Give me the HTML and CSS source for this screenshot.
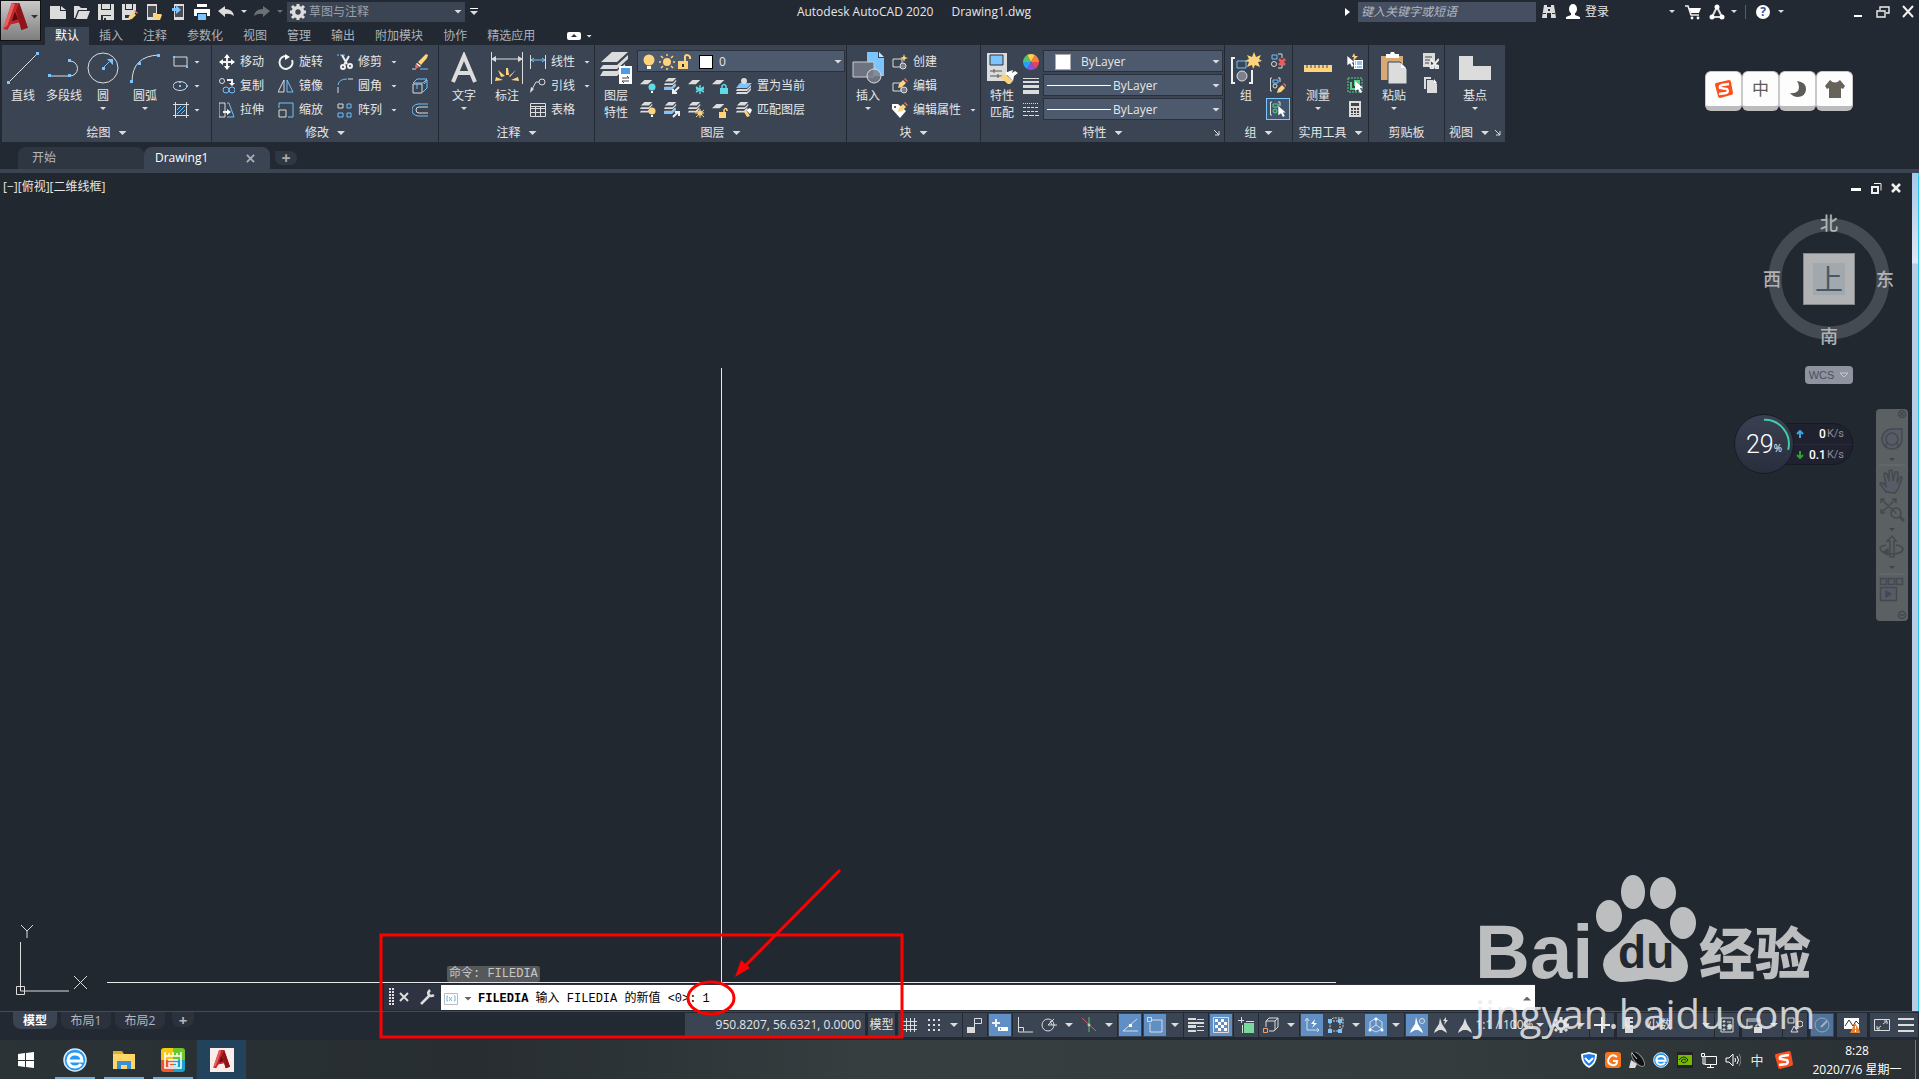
FILE: index.html
```
<!DOCTYPE html>
<html lang="zh-CN">
<head>
    <meta charset="UTF-8">
    <meta name="viewport" content="width=device-width, initial-scale=1.0">
    <title>Autodesk AutoCAD 2020 - Drawing1.dwg</title>
    <link rel="stylesheet" href="styles.css">
</head>
<body>
    <!-- shared shapes -->
    <svg class="sprite" aria-hidden="true">
        <symbol id="sheet" viewBox="0 0 16 16"><path class="g" d="M5 1h9l-5 5H0z"/></symbol>
        <symbol id="sheets" viewBox="0 0 16 16"><path class="g" d="M5 0h9l-4 4H1zM1 6h9l4-4v2l-4 4H0zM1 10h8l4-4v2l-3 4H0z"/></symbol>
        <symbol id="pencil" viewBox="0 0 10 10"><path class="y" d="M0 10l1-4 4-4 3 3-4 4z"/><path class="r" d="M6 1l1-1 3 3-1 1z"/></symbol>
        <symbol id="cursor" viewBox="0 0 8 12"><path class="w" d="M0 0l8 7H5l2 4-2 1-2-4-3 2z"/></symbol>
        <symbol id="logo-a" viewBox="0 0 24 26"><path fill="#c1272d" d="M8 0h7l8 23-6 2-2-7-8 2-3 5-4-1z"/><path fill="#8d1519" d="M15 0l8 23-6 2-5-18z"/><path fill="#e8605f" d="M8 0l3 1-7 20-4 3z"/><path fill="#5b0d10" d="M11 8l3 7-6 2z"/></symbol>
        <symbol id="sogou" viewBox="0 0 18 18"><path fill="#fb4f1d" d="M1 3l13-3q2 0 2 2l2 11q0 2-2 2L5 18q-2 0-2-2L0 5q0-2 1-2z"/><path fill="none" stroke="#fff" stroke-width="2.4" d="M14 4L7 5Q4 6 5 8l7 1q2 3-1 4l-7 1"/></symbol>
    </svg>

    <header class="header">
        <button class="app-menu" aria-label="应用程序菜单"><svg><use href="#logo-a"/></svg><i class="caret"></i></button>
        <div class="header-rows">
            <div class="titlebar">
                <div class="quick">
                    <button aria-label="新建"><svg viewBox="0 0 16 16"><path class="g" d="M0 2h10v5h6v8H0z"/><path class="g" d="M11 2l5 4h-5z"/></svg></button>
                    <button aria-label="打开"><svg viewBox="0 0 16 16"><path class="g" d="M0 2h5l2 2h6v2H4L1 14H0zM5 7h11l-3 8H2z"/></svg></button>
                    <button aria-label="保存"><svg viewBox="0 0 16 16"><path class="g" d="M0 0h3v6h10V0h3v16H0zM4 0h8v5H4z"/><path class="k" d="M3 11h10v5H3z"/><path class="g" d="M5 12h8v4H8v-2H6v2H5z"/></svg></button>
                    <button aria-label="另存为"><svg viewBox="0 0 16 16"><path class="g" d="M0 0h3v6h8V0h3v8L7 16H0z"/><path class="g" d="M4 0h6v5H4z"/><path class="k" d="M3 11h5v3H3z"/><use href="#pencil" x="6" y="6" width="10" height="10"/></svg></button>
                    <button aria-label="从移动设备打开"><svg viewBox="0 0 16 16"><path class="g" d="M1 0h10v16H1z"/><path fill="#4a4d52" d="M2 2h8v11H2z"/><path class="y" d="M7 9h3l1 1h4l1 1-2 5H7z"/></svg></button>
                    <button aria-label="保存到移动设备"><svg viewBox="0 0 16 16"><path class="g" d="M4 0h10v16H4z"/><path fill="#4a4d52" d="M5 2h8v11H5z"/><path class="b" d="M2 4h4V1l5 5-5 4V7H2z"/></svg></button>
                    <button aria-label="打印"><svg viewBox="0 0 16 16"><path class="w" d="M3 0h10v3H3zM0 5h16v7h-3V9H3v3H0z"/><path class="b" d="M4 10h8v6H4z"/></svg></button>
                    <button aria-label="放弃"><svg viewBox="0 0 16 16"><path class="g" d="M0 7l7-5v3q8 0 9 7-4-3-9-2v3z"/></svg></button>
                    <i class="caret sm"></i>
                    <button class="dim" aria-label="重做"><svg viewBox="0 0 16 16"><path class="g" d="M16 7L9 2v3q-8 0-9 7 4-3 9-2v3z"/></svg></button>
                    <i class="caret sm dim"></i>
                </div>
                <label class="workspace">
                    <svg viewBox="0 0 16 16"><circle cx="8" cy="8" r="4.5" fill="none" stroke="#ddd" stroke-width="3.6"/><path stroke="#ddd" stroke-width="3" d="M8 0v3M8 13v3M0 8h3M13 8h3M2 2l2 2M12 12l2 2M14 2l-2 2M4 12l-2 2"/></svg>
                    <select aria-label="工作空间"><option>草图与注释</option></select>
                    <i class="caret"></i>
                </label>
                <button class="customize" aria-label="自定义快速访问工具栏"><i class="caret"></i></button>
                <h1 class="title"><span>Autodesk AutoCAD 2020</span><span>Drawing1.dwg</span></h1>
                <div class="account">
                    <svg class="play" viewBox="0 0 5 8"><path class="w" d="M0 0l5 4-5 4z"/></svg>
                    <input class="keyword" type="text" placeholder="键入关键字或短语" aria-label="键入关键字或短语">
                    <button aria-label="搜索"><svg viewBox="0 0 16 16"><path class="g" d="M3 1h3v2h4V1h3l2 13h-5V9H6v5H1z"/><path class="k" d="M7 5h2v2H7zM2 9h3v1H2zM11 9h3v1h-3z"/></svg></button>
                    <button class="login"><svg viewBox="0 0 16 16"><ellipse class="w" cx="8" cy="5" rx="4" ry="5"/><path class="w" d="M6 9h4v2l5 2v2H1v-2l5-2z"/></svg>登录<i class="caret sm"></i></button>
                    <button aria-label="购物车"><svg viewBox="0 0 16 16"><path fill="none" stroke="#eee" stroke-width="1.6" d="M0 2h3l3 9h8"/><path class="w" d="M4 4h12l-2 5H6z"/><circle class="w" cx="7" cy="14" r="1.4"/><circle class="w" cx="13" cy="14" r="1.4"/></svg></button>
                    <button class="share" aria-label="Autodesk 应用"><svg viewBox="0 0 16 16"><path fill="none" stroke="#ddd" stroke-width="2" d="M8 3l5 10H3z"/><circle class="w" cx="8" cy="3" r="2.5"/><circle class="w" cx="3" cy="13" r="2.5"/><circle class="w" cx="13" cy="13" r="2.5"/></svg><i class="caret sm"></i></button>
                    <button class="help" aria-label="帮助"><b>?</b><i class="caret sm"></i></button>
                </div>
                <div class="window-buttons">
                    <button aria-label="最小化"><svg viewBox="0 0 14 14"><path class="w" d="M3 10h8v2H3z"/></svg></button>
                    <button aria-label="还原"><svg viewBox="0 0 14 14"><path fill="none" stroke="#eee" stroke-width="1.4" d="M4 5V2h9v6h-3M1 6h8v6H1z"/></svg></button>
                    <button aria-label="关闭"><svg viewBox="0 0 14 14"><path fill="none" stroke="#eee" stroke-width="2" d="M2 1l10 11M12 1L2 12"/></svg></button>
                </div>
            </div>
            <nav class="menu">
                <button class="active">默认</button><button>插入</button><button>注释</button><button>参数化</button><button>视图</button><button>管理</button><button>输出</button><button>附加模块</button><button>协作</button><button>精选应用</button>
                <button class="minimize" aria-label="最小化功能区"><svg viewBox="0 0 14 8"><rect class="w" width="14" height="8" rx="2"/><path class="k" d="M4 5l3-3 3 3z"/></svg><i class="caret sm"></i></button>
            </nav>
        </div>
    </header>

    <section class="ribbon">
        <div class="panel draw">
            <div class="panel-body">
                <button class="big w42"><svg viewBox="0 0 32 32"><path class="l" d="M2 30L30 2"/><path class="b" d="M0 29h3v3H0zM29 0h3v3h-3z"/></svg>直线</button>
                <button class="big w40"><svg viewBox="0 0 32 32"><path class="l" d="M1 24h21a7 7 0 000-15"/><path class="b" d="M0 22h3v3H0zM20 22h3v3h-3zM20 7h3v3h-3z"/></svg>多段线</button>
                <button class="big w38"><svg viewBox="0 0 32 32"><circle class="l" cx="16" cy="16" r="15"/><path class="lb" d="M16 16l6-6"/><path class="b" d="M15 15h3v3h-3zM20 7h6v6z"/></svg>圆<i class="caret sm"></i></button>
                <button class="big w46"><svg viewBox="0 0 32 32"><path class="l" d="M3 30Q3 4 30 3"/><path class="b" d="M1 28h3v3H1zM9 10h3v3H9zM28 2h3v3h-3z"/></svg>圆弧<i class="caret sm"></i></button>
                <div class="stack">
                    <button class="small"><svg viewBox="0 0 16 16"><path class="l" d="M1 3h13v9H1z"/><path class="b" d="M0 2h2v2H0zM13 12h2v2h-2z"/></svg><i class="caret sm"></i></button>
                    <button class="small"><svg viewBox="0 0 16 16"><ellipse class="l" cx="7" cy="8" rx="7" ry="4.5"/><path class="b" d="M6 3h2v2H6zM6 7h2v2H6zM13 7h2v2h-2z"/></svg><i class="caret sm"></i></button>
                    <button class="small"><svg viewBox="0 0 16 16"><path class="l" d="M0 2.500h16M0 13.500h16M2.500 0v16M13.500 0v16"/><path class="lb" d="M4 8l4-4M4 12l8-8M8 12l4-4"/></svg><i class="caret sm"></i></button>
                </div>
            </div>
            <div class="panel-title">绘图<i class="caret"></i></div>
        </div>

        <div class="panel modify">
            <div class="panel-body modify-grid">
                <button class="small"><svg viewBox="0 0 16 16"><path class="l2" d="M8 2v12M2 8h12"/><path class="w" d="M8 0l3 4H5zM8 16l3-4H5zM0 8l4-3v6zM16 8l-4-3v6z"/></svg>移动</button>
                <button class="small"><svg viewBox="0 0 16 16"><path class="l2" d="M9 2a6.500 6.500 0 105 4"/><path class="w" d="M7 0l5 3-5 3z"/></svg>旋转</button>
                <button class="small"><svg viewBox="0 0 16 16"><path class="lb" stroke-dasharray="2 1" d="M0 1h8"/><path class="l2" d="M5 1l5 9M12 2l-5 9"/><circle class="l2" cx="6" cy="13" r="2"/><circle class="l2" cx="13" cy="12" r="2"/></svg>修剪<i class="caret sm"></i></button>
                <button class="small"><svg viewBox="0 0 16 16"><path class="y" d="M6 8l8-8 2 1-1 3-6 7z"/><path class="w" d="M5 9l4 3-1 1-4-3z"/><path class="r" d="M4 10l3 3-3 2-1-3z"/><path class="l" d="M0 15h4"/><path class="lb" d="M8 15h8"/></svg></button>
                <button class="small"><svg viewBox="0 0 16 16"><circle class="l" cx="3" cy="3" r="2.500"/><path class="l2" d="M8 2h5v4"/><path class="w" d="M10 5h6l-3 3z"/><circle class="lb" cx="7" cy="12" r="3"/><circle class="lb" cx="13" cy="12" r="3"/></svg>复制</button>
                <button class="small"><svg viewBox="0 0 16 16"><path class="l" d="M6 2v12H0z"/><path class="lb" d="M9 2v12h6z"/></svg>镜像</button>
                <button class="small"><svg viewBox="0 0 16 16"><path class="lb" d="M1 7q1-6 9-6"/><path class="l" d="M1 9v6M11 1h5"/></svg>圆角<i class="caret sm"></i></button>
                <button class="small"><svg viewBox="0 0 16 16"><path class="l" d="M1 6h9v9H1z"/><path class="lb" d="M1 5l4-4h10l-4 4zM12 6l3-4v8l-4 4M5 6v5"/></svg></button>
                <button class="small"><svg viewBox="0 0 16 16"><path class="l" d="M0 1h6v14H0z"/><path class="lb" d="M8 1l2 0 5 14H8"/><path class="l2" d="M4 10h6"/><path class="w" d="M8 7l4 3-4 3z"/></svg>拉伸</button>
                <button class="small"><svg viewBox="0 0 16 16"><path class="lb" d="M1 6V1h14v14h-5"/><path class="l" d="M1 8h7v7H1z"/></svg>缩放</button>
                <button class="small"><svg viewBox="0 0 16 16"><path class="l" d="M1 2h5v4H1z"/><path class="lb" d="M10 2h4v4h-4zM10 11h4v4h-4zM1 11h5v4H1z"/></svg>阵列<i class="caret sm"></i></button>
                <button class="small"><svg viewBox="0 0 16 16"><path class="lb" d="M16 2H6q-6 1-6 6t6 6h10"/><path class="l" d="M16 5H7Q4 5 4 8t3 3h9"/></svg></button>
            </div>
            <div class="panel-title">修改<i class="caret"></i></div>
        </div>

        <div class="panel annotate">
            <div class="panel-body">
                <button class="big w50"><svg viewBox="0 0 32 32"><path fill="none" stroke="#dcdcdc" stroke-width="4" d="M5 30L16 4l11 26M9 21h14"/></svg>文字<i class="caret sm"></i></button>
                <button class="big w36"><svg viewBox="0 0 32 32"><path class="l" d="M.5 0v32M31.500 0v32M2 7h28"/><path class="g" d="M0 7l5-3v6zM32 7l-5-3v6z"/><path class="y" d="M4 29l8-1-7-3zM7 18l7 6-4 1zM15 16h2l1 7h-3zM25 18l-6 7-1-1zM28 29l-8-1 7-3z"/></svg>标注</button>
                <div class="stack">
                    <button class="small"><svg viewBox="0 0 16 16"><path class="l" d="M.5 1v14M15.500 1v14"/><path class="lb" d="M1 6h14M4 4L1 6l3 2M12 4l3 2-3 2"/></svg>线性<i class="caret sm"></i></button>
                    <button class="small"><svg viewBox="0 0 16 16"><circle class="l" cx="12" cy="4" r="3"/><path class="l" d="M9 4H6L1 13"/><path class="g" d="M0 15l1-6 3 2z"/></svg>引线<i class="caret sm"></i></button>
                    <button class="small"><svg viewBox="0 0 16 16"><path class="l" d="M.5 1.500h15v13H.5zM0 6.500h16M0 10.500h16M5.500 5v10M10.500 5v10M0 4.500h16"/></svg>表格</button>
                </div>
            </div>
            <div class="panel-title">注释<i class="caret"></i></div>
        </div>

        <div class="panel layers">
            <div class="panel-body">
                <button class="big w42"><svg viewBox="0 0 32 32"><path class="g" d="M12 0h16L17 10H1zM3 13h14L28 3v4L17 17H0zM3 19h14l8-7v4l-8 8H0z"/><path class="w" d="M19 14h13v18H19z"/><path fill="#4a9ce0" d="M21 16h9v6h-9z"/><path fill="none" stroke="#444" d="M22 26h7M27 24l2 2M29 29h-7M24 31l-2-2"/></svg>图层<br>特性</button>
                <div class="stack">
                    <label class="combo">
                        <svg viewBox="0 0 16 16"><circle class="y" cx="8" cy="6" r="5.500"/><path class="w" d="M6 12h4v3H6z"/></svg>
                        <svg viewBox="0 0 16 16"><circle class="y" cx="8" cy="8" r="4"/><path stroke="#ffd37a" stroke-width="1.500" d="M8 0v2M8 14v2M0 8h2M14 8h2M2 2l2 2M12 12l2 2M14 2l-2 2M4 12l-2 2"/></svg>
                        <svg viewBox="0 0 16 16"><path class="y" d="M1 7h10v8H1z"/><path fill="none" stroke="#ffd37a" stroke-width="2" d="M8 7V3q0-2 2-2t3 2v2"/><path class="k" d="M5 10h2v3H5z"/></svg>
                        <i class="swatch dark"></i>
                        <select aria-label="图层"><option>0</option></select><i class="caret"></i>
                    </label>
                    <div class="layer-row">
                        <button><svg viewBox="0 0 16 16"><use href="#sheet" width="14" height="16"/><circle class="c" cx="12" cy="9" r="3.500"/><path class="w" d="M11 13h2v2h-2z"/></svg></button>
                        <button><svg viewBox="0 0 16 16"><use href="#sheets" width="14" height="14"/><path class="b" d="M0 9h8l4-3v2l-4 4H0z"/><path class="l2" d="M15 9l-5 5M9 11v4h4"/></svg></button>
                        <button><svg viewBox="0 0 16 16"><use href="#sheet" width="14" height="16"/><path stroke="#5fdbe6" stroke-width="1.500" d="M12 7v9M8 9l8 5M16 9l-8 5M8 11h8"/></svg></button>
                        <button><svg viewBox="0 0 16 16"><use href="#sheet" width="14" height="16"/><path class="c" d="M8 10h8v6H8z"/><path fill="none" stroke="#5fdbe6" stroke-width="1.500" d="M10 10V8q2-3 4 0v2"/></svg></button>
                        <button class="small"><svg viewBox="0 0 16 16"><path class="b" d="M4 5h12l-5 5H0z"/><circle class="g" cx="8" cy="3" r="3"/><path class="g" d="M1 11h10l4-4v2l-4 4H0zM1 14h10l4-4v2l-4 4H0z"/></svg>置为当前</button>
                    </div>
                    <div class="layer-row">
                        <button><svg viewBox="0 0 16 16"><use href="#sheets" width="14" height="14"/><circle class="y" cx="12" cy="9" r="3.500"/><path class="w" d="M11 13h2v2h-2z"/></svg></button>
                        <button><svg viewBox="0 0 16 16"><use href="#sheets" width="14" height="14"/><path class="b" d="M0 9h8l4-3v2l-4 4H0z"/><path class="l2" d="M9 15l5-5M11 10h4v4"/></svg></button>
                        <button><svg viewBox="0 0 16 16"><use href="#sheets" width="14" height="14"/><circle class="y" cx="12" cy="11" r="2.500"/><path stroke="#ffd37a" d="M12 7v9M8 8l8 7M16 8l-8 7M7 11h9"/></svg></button>
                        <button><svg viewBox="0 0 16 16"><use href="#sheet" width="14" height="16"/><path class="y" d="M7 10h7v6H7z"/><path fill="none" stroke="#ffd37a" stroke-width="1.500" d="M12 10V8q2-3 3 0v1"/></svg></button>
                        <button class="small"><svg viewBox="0 0 16 16"><use href="#sheets" width="14" height="14"/><path class="y" d="M8 10l3 5 3-1-4-6z"/><path class="w" d="M10 8l4-2 2 2-2 4z"/></svg>匹配图层</button>
                    </div>
                </div>
            </div>
            <div class="panel-title">图层<i class="caret"></i></div>
        </div>

        <div class="panel block">
            <div class="panel-body">
                <button class="big w42"><svg viewBox="0 0 32 32"><path class="b" d="M15 0h11v6h6v18H15z"/><path fill="#c9e6ff" d="M27 0l5 5h-5z"/><path fill="#6d7380" stroke="#ccc" d="M1 10h21v15H1z"/><circle fill="#7b808bcc" stroke="#ddd" cx="22" cy="24" r="7"/></svg>插入<i class="caret sm"></i></button>
                <div class="stack">
                    <button class="small"><svg viewBox="0 0 16 16"><path class="l" d="M1 5h9v8H1z"/><circle fill="#777d88" stroke="#ddd" cx="11" cy="12" r="3"/><path class="y" d="M12 0l1 3 3 1-3 1-1 3-1-3-3-1 3-1z"/></svg>创建</button>
                    <button class="small"><svg viewBox="0 0 16 16"><path class="l" d="M1 5h8v8H1z"/><circle fill="#777d88" stroke="#ddd" cx="12" cy="12" r="3"/><use href="#pencil" x="6" width="10" height="10"/></svg>编辑</button>
                    <button class="small"><svg viewBox="0 0 16 16"><path class="w" d="M0 2h6l8 7-6 7-8-9z"/><circle class="k" cx="3" cy="5" r="1"/><use href="#pencil" x="6" width="10" height="10"/></svg>编辑属性<i class="caret sm"></i></button>
                </div>
            </div>
            <div class="panel-title">块<i class="caret"></i></div>
        </div>

        <div class="panel props">
            <div class="panel-body">
                <button class="big w42"><svg viewBox="0 0 32 32"><path class="g" d="M1 1h20v28H1z"/><path class="b" stroke="#333" d="M4 3h13v10H4z"/><path stroke="#555" d="M4 19h12M4 24h12M8 17v4M12 22v4"/><path class="y" d="M14 25l9 8 4-4-8-7z"/><path class="w" d="M19 21l8 8 1-5 4-3-3-2-3 2 1-3-3 1z"/></svg>特性<br>匹配</button>
                <div class="stack prop-icons">
                    <svg viewBox="0 0 16 16"><path fill="#ffd04a" d="M8 8L4 1q4-2 8 0z"/><path fill="#f5823b" d="M8 8l4-7q4 3 4 7z"/><path fill="#e2445c" d="M8 8h8q0 4-4 7z"/><path fill="#8a4fe0" d="M8 8l4 7q-4 2-8 0z"/><path fill="#2a9df4" d="M8 8l-4 7Q0 12 0 8z"/><path fill="#4ec36c" d="M8 8H0q0-4 4-7z"/></svg>
                    <svg viewBox="0 0 16 16"><path class="g" d="M0 0h16v1H0zM0 3h16v2H0zM0 7h16v3H0zM0 12h16v4H0z"/></svg>
                    <svg viewBox="0 0 16 16"><path class="l" stroke-dasharray="1 1" d="M0 1.500h16"/><path class="l" stroke-dasharray="3 1" d="M0 5.500h16M0 9.500h16"/><path class="l" stroke-dasharray="5 1" d="M0 13.500h16"/></svg>
                </div>
                <div class="stack prop-combos">
                    <label class="combo"><i class="swatch big-swatch"></i><select aria-label="对象颜色"><option>ByLayer</option></select><i class="caret"></i></label>
                    <label class="combo"><i class="line"></i><select aria-label="线宽"><option>ByLayer</option></select><i class="caret"></i></label>
                    <label class="combo"><i class="line"></i><select aria-label="线型"><option>ByLayer</option></select><i class="caret"></i></label>
                </div>
            </div>
            <div class="panel-title">特性<i class="caret"></i><svg class="launcher" viewBox="0 0 6 6"><path class="l" d="M0 0l5 5M1 5h4V1"/></svg></div>
        </div>

        <div class="panel group">
            <div class="panel-body">
                <button class="big w42"><svg viewBox="0 0 32 32"><path class="l2" d="M5 6H2v25h3M19 31h3V18"/><path class="lb" fill="#4a78a8" d="M7 9h9v7H7z"/><circle fill="#7b808b" stroke="#ddd" cx="12" cy="24" r="5"/><path class="y" d="M24 0l2 5 5-2-2 4 3 2-4 1 2 5-5-2-2 4-1-4-5 2 2-5-4-1 4-2-2-4 5 2z"/></svg>组</button>
                <div class="stack tools">
                    <button><svg viewBox="0 0 16 16"><path class="l" d="M8 1h4v4M12 11v4H8"/><path class="lb" d="M2 2h5v4H2z"/><circle class="l" cx="4" cy="11" r="2.500"/><path stroke="#f25a5a" stroke-width="2.500" d="M9 6l6 6M15 6l-6 6"/></svg></button>
                    <button><svg viewBox="0 0 16 16"><path class="l" d="M2 1H.5v13H2M8 1h2v4"/><path class="lb" d="M3 3h5v3H3z"/><circle class="l" cx="5" cy="9" r="2"/><use href="#pencil" x="7" y="6" width="10" height="10"/></svg></button>
                    <button class="on"><svg viewBox="0 0 16 16"><path class="l" d="M2 1H.5v13H2M8 1h2v4"/><path fill="none" stroke="#5cd087" d="M3 3h5v3H3z"/><circle fill="#2a7a55" stroke="#5cd087" cx="5" cy="10" r="2"/><use href="#cursor" x="8" y="5" width="8" height="11"/></svg></button>
                </div>
            </div>
            <div class="panel-title">组<i class="caret"></i></div>
        </div>

        <div class="panel util">
            <div class="panel-body">
                <button class="big w50"><svg viewBox="0 0 32 32"><path class="y" d="M2 13h28v7H2z"/><path stroke="#3b4453" d="M5 13v3M9 13v3M13 13v3M17 13v3M21 13v3M25 13v3"/></svg>测量<i class="caret sm"></i></button>
                <div class="stack tools">
                    <button><svg viewBox="0 0 16 16"><path class="y" d="M7 0l-2 4h2L6 8l5-5H8z"/><path class="w" d="M7 7h9v9H7z"/><path stroke="#2d86d9" d="M8 9h1M10 9h5M8 11h1M10 11h5M8 14h1M10 14h5"/><use href="#cursor" y="3" width="8" height="11"/></svg></button>
                    <button><svg viewBox="0 0 16 16"><path fill="none" stroke="#5cd087" stroke-dasharray="2 1" d="M1 1h14v14H1z"/><path fill="#5cd087" d="M7 3h6v6H7z"/><path fill="none" stroke="#5cd087" stroke-width="2" d="M4 5v7h7"/><use href="#cursor" x="8" y="4" width="8" height="12"/></svg></button>
                    <button><svg viewBox="0 0 16 16"><path class="g" d="M2 0h12v16H2z"/><path fill="#444" d="M4 2h8v3H4zM4 7h2v2H4zM7 7h2v2H7zM10 7h2v2h-2zM4 10h2v2H4zM7 10h2v2H7zM10 10h2v2h-2zM4 13h2v1H4zM7 13h2v1H7zM10 13h2v1h-2z"/></svg></button>
                </div>
            </div>
            <div class="panel-title">实用工具<i class="caret"></i></div>
        </div>

        <div class="panel clip">
            <div class="panel-body">
                <button class="big w50"><svg viewBox="0 0 32 32"><path fill="#d9a973" d="M3 4h22v24H3z"/><path class="w" d="M8 2h4l1-2h3l1 2h4v4H8z"/><path class="g" stroke="#3b4453" d="M10 10h12l7 7v15H10z"/><path class="w" d="M23 11l5 5h-5z"/></svg>粘贴<i class="caret sm"></i></button>
                <div class="stack tools">
                    <button><svg viewBox="0 0 16 16"><path class="g" d="M0 0h12v9H8v5H0z"/><path stroke="#444" d="M2 4h7M2 7h5M2 10h4"/><path class="l2" d="M8 6l6 8M16 6l-7 8"/><circle class="l2" cx="9" cy="14" r="1.500"/><circle class="l2" cx="14" cy="14" r="1.500"/></svg></button>
                    <button><svg viewBox="0 0 16 16"><path class="g" d="M1 0h7v2H3v10H1z"/><path class="g" d="M4 3h6l4 4v9H4z"/><path class="w" d="M11 2l3 4h-3z"/></svg></button>
                </div>
            </div>
            <div class="panel-title">剪贴板</div>
        </div>

        <div class="panel view">
            <div class="panel-body">
                <button class="big w60"><svg viewBox="0 0 32 32"><path class="g" d="M0 4h14v10h18v14H0z"/></svg>基点<i class="caret sm"></i></button>
            </div>
            <div class="panel-title launch-pad">视图<i class="caret"></i><svg class="launcher" viewBox="0 0 6 6"><path class="l" d="M0 0l5 5M1 5h4V1"/></svg></div>
        </div>
    </section>

    <nav class="file-tabs">
        <button class="file-tab">开始</button>
        <button class="file-tab active">Drawing1<svg viewBox="0 0 10 10"><path stroke="#aab0b8" stroke-width="2" d="M1 1l8 8M9 1L1 9"/></svg></button>
        <button class="new-tab" aria-label="新图形">+</button>
    </nav>

    <main class="canvas">
        <div class="viewport-label">[−][俯视][二维线框]</div>
        <div class="viewport-buttons">
            <button aria-label="最小化"><svg viewBox="0 0 12 12"><path class="w" d="M1 6h10v3H1z"/></svg></button>
            <button aria-label="还原"><svg viewBox="0 0 12 12"><path fill="none" stroke="#eee" stroke-width="2" d="M2 5h6v6H2z"/><path fill="none" stroke="#eee" d="M4 1.500h7v7"/></svg></button>
            <button aria-label="关闭"><svg viewBox="0 0 12 12"><path stroke="#eee" stroke-width="2.500" d="M2 2l8 8M10 2l-8 8"/></svg></button>
        </div>

        <div class="cross-v"></div>
        <div class="cross-h"></div>
        <svg class="ucs" viewBox="0 0 76 76"><path class="l" d="M5.500 20v49H54M1.500 64.500h8v8h-8zM6 3l6 6 6-6M12 9v7M59 54l13 13M72 54L59 67"/></svg>

        <div class="viewcube">
            <svg viewBox="0 0 140 140"><circle cx="70" cy="70" r="54" fill="none" stroke="#454b53" stroke-width="13"/></svg>
            <span class="n">北</span><span class="s">南</span><span class="west">西</span><span class="e">东</span>
            <button class="face"><span>上</span></button>
        </div>
        <button class="wcs">WCS<svg viewBox="0 0 10 6"><path fill="none" stroke="#c3c6cf" d="M1 1h8L5 5z"/></svg></button>

        <div class="net">
            <div class="ball"><svg viewBox="0 0 60 60"><path fill="none" stroke="#3ecfa8" stroke-width="2" d="M30 5a25 25 0 0125 31"/></svg><strong>29</strong><small>%</small></div>
            <div class="rates">
                <p><svg viewBox="0 0 8 8"><path stroke="#35a8e8" stroke-width="2" fill="none" d="M4 8V2M1 4l3-3 3 3"/></svg><b>0</b>K/s</p>
                <p><svg viewBox="0 0 8 8"><path stroke="#2ba12f" stroke-width="2" fill="none" d="M4 0v6M1 4l3 3 3-3"/></svg><b>0.1</b>K/s</p>
            </div>
        </div>

        <div class="navbar">
            <svg viewBox="0 0 32 212"><g fill="none" stroke="#45494e" stroke-width="1.500">
                <circle cx="26" cy="5" r="3.500"/><path d="M24 3l4 4M28 3l-4 4"/>
                <path fill="#575d68" d="M6 30a10 10 0 0110-10h10v10a10 10 0 01-20 0z"/><circle cx="16" cy="30" r="6"/><path d="M12 34l-4 4M20 34l4 4"/>
                <path d="M3 56h26M3 165h26" stroke="#6a6f72" stroke-width="1"/>
                <path fill="#575d68" d="M10 83l-6-8q0-2 3-1l3 3-2-12q1-2 3 0l2 7V62q2-2 3 0l1 10 2-9q2-1 3 1l-1 10 3-6q2-1 2 1l-4 11-3 4z"/>
                <path d="M5 90l15 14M20 90L5 104M5 94v-4h4M16 90h4v4M5 100v4h4"/><circle cx="20" cy="104" r="5"/><path stroke-width="3" d="M24 108l4 4"/>
                <path d="M14 148v-16h-3l5-5 4 5h-2v16zM10 136q-6 1-6 4 2 5 12 5t11-5q0-3-7-4"/><path fill="#45494e" d="M12 140v6l-5-3z"/>
                <path fill="#575d68" d="M4.500 169.500h6v6h-6zM12.500 169.500h6v6h-6zM20.500 169.500h6v6h-6zM4.500 178.500h16v13h-16z"/><path fill="#45494e" d="M10 182v6l5-3z"/>
                <circle cx="26" cy="206" r="3.500"/><path d="M24 206h4"/></g>
                <path fill="#404449" d="M13 49h6l-3 3zM13 119h6l-3 3zM13 157h6l-3 3z"/>
            </svg>
        </div>
        <div class="edge"></div>

        <div class="history">命令: FILEDIA</div>
        <div class="command">
            <svg class="grip" viewBox="0 0 5 18"><path stroke="#ddd" stroke-width="2" stroke-dasharray="2 1" d="M1 0v18M4 0v18"/></svg>
            <button aria-label="关闭"><svg viewBox="0 0 10 10"><path stroke="#ddd" stroke-width="2" d="M1 1l8 8M9 1L1 9"/></svg></button>
            <button class="wrench" aria-label="自定义"><svg viewBox="0 0 16 16"><path stroke="#ddd" stroke-width="2.500" d="M1 15l8-8"/><path fill="none" stroke="#ddd" stroke-width="2.500" d="M10 1q-3 3-1 5t5 0"/></svg></button>
            <label class="prompt">
                <svg viewBox="0 0 14 12"><path fill="none" stroke="#bbb" d="M.5.5h13v11H.5z"/><path fill="none" stroke="#6fb8ea" d="M4 3H3v5h1M10 3h1v5h-1M5 4l3 4M8 4L5 8"/></svg>
                <i class="caret"></i>
                <span><b>FILEDIA</b> 输入 FILEDIA 的新值 &lt;0&gt;:</span>
                <input type="text" value="1">
                <i class="caret up"></i>
            </label>
        </div>
    </main>

    <footer class="statusbar">
        <nav class="layout-tabs">
            <button class="active">模型</button><button>布局1</button><button>布局2</button><button class="add" aria-label="新建布局">+</button>
        </nav>
        <div class="status">
            <div class="seg coords">950.8207, 56.6321, 0.0000</div>
            <div class="seg wide"><button class="text">模型</button></div>
            <div class="seg wide">
                <button><svg viewBox="0 0 16 16"><path class="l" d="M4.500 1v14M8.500 1v14M12.500 1v14M1 4.500h14M1 8.500h14M1 12.500h14"/></svg></button>
                <button><svg viewBox="0 0 16 16"><path stroke="#ddd" stroke-width="2" stroke-dasharray="2 3" d="M2 3h12M2 8h12M2 13h12"/></svg></button>
                <i class="caret"></i>
            </div>
            <div class="seg"><button><svg viewBox="0 0 16 16"><path class="g" d="M0 10h8v6H0z"/><path class="l" d="M7.500 10V1.500h7v5h-7"/></svg></button></div>
            <div class="seg"><button class="on"><svg viewBox="0 0 16 16"><path class="l2" d="M4 2v8M0 6h8"/><path class="w" d="M6 10h10v4H6z"/><path fill="#5f8fc4" d="M8 11h1v2H8z"/></svg></button></div>
            <div class="seg">
                <button><svg viewBox="0 0 16 16"><path class="l" d="M1.500 0v15H16M1.500 10.500h5v4"/></svg></button>
                <button><svg viewBox="0 0 16 16"><circle class="l" cx="7" cy="8" r="6"/><path class="l" d="M16 8H7l6-6M9 4l2 4"/></svg></button>
                <i class="caret"></i>
                <button><svg viewBox="0 0 16 16"><path stroke="#e25c5c" d="M1 1l14 13"/><path stroke="#57c35c" d="M8 0v15"/><circle class="l" cx="8" cy="8" r="1"/></svg></button>
                <i class="caret"></i>
            </div>
            <div class="seg"><button class="on"><svg viewBox="0 0 16 16"><path class="l" d="M15 2L1 14h15"/><path class="w" d="M7 7h3v3H7z"/></svg></button></div>
            <div class="seg"><button class="on"><svg viewBox="0 0 16 16"><path class="l" d="M5 3h10v12H3V6M.5.5h4v4h-4z"/></svg></button><i class="caret"></i></div>
            <div class="seg"><button><svg viewBox="0 0 16 16"><path class="g" d="M0 1h8v2H0zM9 2h7v1H9zM0 5h16v2H0zM0 8h8v3H0zM9 9h7v1H9zM0 13h8v2H0zM9 13h7v1H9z"/></svg></button></div>
            <div class="seg"><button class="on"><svg viewBox="0 0 16 16"><path class="l" d="M.5.5h15v15H.5z"/><path stroke="#fff" stroke-width="3" stroke-dasharray="3 3" d="M2 3.500h12M5 6.500h9M2 9.500h12M5 12.500h9"/></svg></button></div>
            <div class="seg"><button><svg viewBox="0 0 16 16"><path fill="#7bd89b" d="M6 6h10v10H6z"/><path class="l" d="M3.500 0v6M0 3.500h6M8 4.500h8M4.500 8v8"/></svg></button></div>
            <div class="seg"><button><svg viewBox="0 0 16 16"><path class="l" d="M3 10V4l3-3h9v9l-4 4H6M3 4h9v9M12 4l3-3"/><path fill="none" stroke="#f0a070" d="M.5 11.500h4v4h-4z"/></svg></button><i class="caret"></i></div>
            <div class="seg">
                <button class="on"><svg viewBox="0 0 16 16"><path class="l" d="M3 2v11h12M1 4l2-3 2 3M13 11l2 2-2 2"/><path class="w" d="M11 2L7 7h3l-2 4 5-5h-3z"/></svg></button>
                <button><svg viewBox="0 0 16 16"><path class="l" stroke-dasharray="2 1" d="M2 4l3-3h10v9l-3 4H2zM2 4h10v10"/><path class="b" d="M0 2h4v4H0zM10 2h4v4h-4zM0 12h4v4H0zM10 12h4v4h-4z"/></svg></button>
                <i class="caret"></i>
                <button class="on"><svg viewBox="0 0 16 16"><path class="l" d="M8 1l6 4v7l-6 3-6-3V5zM8 1v7l6 4M8 8l-6 4"/><circle class="w" cx="8" cy="2" r="1.500"/><circle class="w" cx="2" cy="13" r="1.500"/><circle class="w" cx="14" cy="13" r="1.500"/></svg></button>
                <i class="caret"></i>
            </div>
            <div class="seg">
                <button class="on"><svg viewBox="0 0 16 16"><path class="w" d="M7 0l2 7 4 6 1 3-5-3H6l-5 3 1-3 4-6z"/><circle class="l" cx="13" cy="4" r="2.500"/></svg></button>
                <button><svg viewBox="0 0 16 16"><path class="g" d="M7 1l2 6 4 6 1 3-5-3H6l-5 3 1-3 4-6z"/><path class="g" d="M13 0l-3 4h2l-1 4 4-5h-2z"/></svg></button>
                <button><svg viewBox="0 0 16 16"><path class="g" d="M8 1l2 6 4 6 1 3-5-3H6l-5 3 1-3 4-6z"/></svg></button>
                <button class="text scale">1:1 / 100%</button><i class="caret"></i>
            </div>
            <div class="seg"><button><svg viewBox="0 0 16 16"><circle cx="8" cy="8" r="4" fill="none" stroke="#ddd" stroke-width="3"/><path stroke="#ddd" stroke-width="3" d="M8 0v3M8 13v3M0 8h3M13 8h3M2 2l2 2M12 12l2 2M14 2l-2 2M4 12l-2 2"/></svg></button><i class="caret"></i></div>
            <div class="seg"><button><svg viewBox="0 0 16 16"><path class="l2" d="M8 0v16M0 8h16"/></svg></button></div>
            <div class="seg wide units"><button><svg viewBox="0 0 16 16"><path class="g" d="M4 0h8v2H9v2h3v2H9v2h3v2H9v2h3v4H4z"/></svg></button><button class="text">小数</button><i class="caret"></i></div>
            <div class="seg"><button><svg viewBox="0 0 16 16"><path class="l" d="M2 1h12v14H2zM4 4h2v1H4zM4 8h2v1H4zM4 12h2v1H4zM8 5h4M8 9h4M8 12h4"/></svg></button></div>
            <div class="seg wide"><button><svg viewBox="0 0 16 16"><path class="l" d="M1 11V2h13v4M1 4h13"/><path class="g" d="M8 10h8v6H8z"/><path class="l" d="M10 10V8h4v2"/></svg></button><i class="caret"></i></div>
            <div class="seg"><button><svg viewBox="0 0 16 16"><path class="l" d="M1 1h6v5H1zM7 9l4 6H4z"/><circle class="l" cx="13" cy="7" r="3"/></svg></button></div>
            <div class="seg wide"><button class="on muted"><svg viewBox="0 0 16 16"><circle class="l" cx="8" cy="8" r="7"/><path class="l2" d="M7 10l6-6"/></svg></button></div>
            <div class="seg wide"><button class="perf"><svg viewBox="0 0 16 16"><path class="w" d="M0 1h15v11H0z"/><path fill="none" stroke="#333" d="M1 9l4-6 4 6 3-5 3 3"/><path fill="#e8822e" d="M11 6l6 10H6z"/><path stroke="#fff" d="M11.500 9v3M11.500 13v2"/></svg></button></div>
            <div class="seg wide">
                <button><svg viewBox="0 0 16 16"><path class="l" d="M.5 2.500h15v11H.5zM9 7l4-3M10 4h3v3M7 9l-4 3M3 9v3h3"/></svg></button>
                <button><svg viewBox="0 0 16 16"><path class="g" d="M0 1h16v2H0zM0 7h16v2H0zM0 13h16v2H0z"/></svg></button>
            </div>
        </div>
    </footer>

    <div class="taskbar">
        <button class="task start" aria-label="开始"><svg viewBox="0 0 16 16"><path class="w" d="M0 2l7-1v7H0zM8 1l8-1v8H8zM0 9h7v6l-7-1zM8 9h8v7l-8-1z"/></svg></button>
        <button class="task open" aria-label="浏览器"><svg viewBox="0 0 24 24"><circle cx="12" cy="12" r="11" fill="#2498f5" stroke="#d7e9f5" stroke-width="1.500"/><path fill="none" stroke="#fff" stroke-width="3" d="M6 13h13q0-7-7-7t-7 7q1 6 7 6 4 0 6-3"/></svg></button>
        <button class="task open" aria-label="文件资源管理器"><svg viewBox="0 0 24 24"><path fill="#e9a72e" d="M1 3h9l2 3H1z"/><path fill="#ffd768" d="M1 6h22v15H1z"/><path fill="#3a8fd6" d="M5 13h14v8h-4v-4H9v4H5z"/></svg></button>
        <button class="task open" aria-label="应用"><svg viewBox="0 0 24 24"><path fill="#f6c915" d="M0 3q0-3 3-3h9v12H0z"/><path fill="#6cc62c" d="M12 0h9q3 0 3 3v9H12z"/><path fill="#f0562d" d="M0 12h12v12H3q-3 0-3-3z"/><path fill="#1aa3c9" d="M12 12h12v9q0 3-3 3h-9z"/><path fill="none" stroke="#fff" stroke-width="1.500" d="M4 4v16h16V4M4 8h16M8 8V5M12 8V4M16 8V5M7 12h10M8 15h8v3H8z"/></svg></button>
        <button class="task current" aria-label="AutoCAD"><svg viewBox="0 0 24 24"><path fill="#fbeeea" d="M0 0h24v24H0z"/><use href="#logo-a" x="3" y="2" width="18" height="19"/></svg></button>
        <div class="tray">
            <svg viewBox="0 0 16 16"><path fill="#fff" d="M8 0l8 2q0 10-8 14Q0 12 0 2z"/><path fill="#1c7cf0" d="M8 2l6 1q0 8-6 11Q2 11 2 3z"/><path fill="none" stroke="#fff" stroke-width="2" d="M4 6l4 4 4-4"/></svg>
            <svg viewBox="0 0 16 16"><rect width="16" height="16" rx="3" fill="#f4771f"/><path fill="none" stroke="#fff" stroke-width="2" d="M12 5q-5-4-8 1t3 7q5 1 5-4H8"/></svg>
            <svg viewBox="0 0 16 16"><ellipse cx="9" cy="7" rx="9" ry="4" transform="rotate(50 9 7)" fill="#111" stroke="#888"/><path fill="#ddd" d="M2 8l6 4-2 4H0z"/><path stroke="#ddd" d="M3 1l5 6"/></svg>
            <svg viewBox="0 0 24 24"><circle cx="12" cy="12" r="11" fill="#2498f5" stroke="#d7e9f5" stroke-width="1.500"/><path fill="none" stroke="#fff" stroke-width="3" d="M6 13h13q0-7-7-7t-7 7q1 6 7 6 4 0 6-3"/></svg>
            <svg viewBox="0 0 16 16"><path fill="#222" d="M0 0h16v16H0z"/><path fill="#76b900" d="M1 3h14v10H1z"/><path fill="none" stroke="#222" d="M2 8q5-6 9 0-4 5-7 1 2-3 5-1"/></svg>
            <svg viewBox="0 0 16 16"><path fill="none" stroke="#fff" d="M4 4.500h11.500v8H4zM6 15.500h7M9.500 12v3M.5 1.500h3v3h-3zM2 5v7h2"/></svg>
            <svg viewBox="0 0 16 16"><path fill="none" stroke="#fff" d="M1 6h3l4-4v12l-4-4H1zM10 6q1 2 0 4M12 4q3 4 0 8"/><path fill="none" stroke="#888" d="M14 2q4 6 0 12"/></svg>
            <button class="lang">中</button>
            <svg class="sg"><use href="#sogou"/></svg>
        </div>
        <div class="clock"><time>8:28</time><time>2020/7/6 星期一</time></div>
        <button class="show-desktop" aria-label="显示桌面"></button>
    </div>

    <!-- input method keys floating over the ribbon -->
    <div class="ime">
        <button aria-label="搜狗"><svg class="sg"><use href="#sogou"/></svg></button>
        <button>中</button>
        <button aria-label="半角"><svg viewBox="0 0 16 16"><path fill="#5d5b58" d="M7 0q9 1 9 8t-8 8q-5 0-8-4 9 1 9-6 0-3-2-6z"/></svg></button>
        <button aria-label="皮肤"><svg class="shirt" viewBox="0 0 20 18"><path fill="#67635a" d="M5 0q5 5 10 0l5 6-2 3-2-1v10H4V8L2 9 0 6z"/></svg></button>
    </div>

    <div class="watermark">
        <div class="brand">
            <span class="bai">Bai</span>
            <span class="paw"><svg viewBox="0 0 100 108"><g fill="#bcbec0"><ellipse cx="13" cy="41" rx="13" ry="16"/><ellipse cx="37" cy="17" rx="12" ry="17"/><ellipse cx="67" cy="18" rx="13" ry="16"/><ellipse cx="87" cy="48" rx="13" ry="16"/><path d="M49 44q8 0 15 10 5 9 17 18 11 10 11 19-1 16-18 16-12-3-24-3-14 3-25 3Q9 106 7 90q0-10 11-18 11-9 16-17 7-11 15-11z"/></g></svg><b>du</b></span>
            <span class="jingyan">经验</span>
        </div>
        <div class="url">jingyan.baidu.com</div>
    </div>

    <svg class="marks" viewBox="0 0 530 180"><g fill="none" stroke="#fe0000" stroke-width="3"><path d="M4 69h521v102H4z"/><ellipse cx="334" cy="132" rx="23" ry="16"/><path d="M463 4L368 100"/></g><path fill="#fe0000" d="M358 111l6-17 9 8z"/></svg>
</body>
</html>
```
FILE: styles.css
```
* {
    box-sizing: border-box;
}

body {
    margin: 0;
    height: 100vh;
    display: flex;
    flex-direction: column;
    position: relative;
    overflow: hidden;
    background: #222932;
    color: #e6e6e6;
    font-family: "Open Sans", "Noto Sans CJK SC", sans-serif;
    font-size: 12px;
    line-height: 16px;
}

button, input, select {
    font: inherit;
    color: inherit;
    background: none;
    border: 0;
    padding: 0;
    margin: 0;
}

button {
    display: flex;
    align-items: center;
    justify-content: center;
    white-space: nowrap;
}

select {
    appearance: none;
    flex: 1;
    min-width: 0;
}

input:focus, select:focus {
    outline: none;
}

svg {
    display: block;
    flex: none;
    width: 16px;
    height: 16px;
}

.sprite {
    position: absolute;
    width: 0;
    height: 0;
}

/* icon colours */
.g { fill: #dcdcdc; }
.w { fill: #fff; }
.k { fill: #2a3039; }
.b { fill: #7cc5ff; }
.y { fill: #ffd37a; }
.r { fill: #f06a5f; }
.c { fill: #5fdbe6; }
.l { fill: none; stroke: #dcdcdc; }
.l2 { fill: none; stroke: #f0f0f0; stroke-width: 2; }
.lb { fill: none; stroke: #6fc1ff; }

.caret {
    flex: none;
    width: 8px;
    height: 4px;
    background: #dcdcdc;
    clip-path: polygon(0 0, 100% 0, 50% 100%);
}
.caret.sm {
    width: 6px;
    height: 3px;
}
.caret.up {
    background: #666;
    clip-path: polygon(50% 0, 100% 100%, 0 100%);
}
.dim {
    opacity: 0.4;
}

/* title bar and menu */
.header {
    display: flex;
    height: 45px;
}
.app-menu {
    width: 41px;
    height: 41px;
    gap: 2px;
    padding-bottom: 8px;
    border: 1px solid #111;
    background: linear-gradient(#c9c9c9, #7d7d7d);
}
.app-menu svg {
    width: 26px;
    height: 28px;
}
.app-menu .caret {
    background: #333;
}
.header-rows {
    flex: 1;
}
.titlebar {
    display: flex;
    align-items: center;
    height: 23px;
}
.quick {
    display: flex;
    align-items: center;
    padding-left: 5px;
    width: 246px;
}
.quick button {
    width: 24px;
}
.quick .caret {
    margin: 0 3px;
}
.workspace {
    display: flex;
    align-items: center;
    width: 178px;
    height: 20px;
    padding: 0 3px;
    gap: 3px;
    background: #3b4453;
    color: #9aa1ab;
}
.customize {
    flex-direction: column;
    gap: 2px;
    width: 18px;
}
.customize::before {
    content: "";
    width: 8px;
    height: 1px;
    background: #fff;
}
.title {
    flex: 1;
    display: flex;
    justify-content: center;
    gap: 18px;
    margin: 0;
    font-size: 12px;
    font-weight: normal;
}
.account {
    display: flex;
    align-items: center;
    gap: 8px;
}
.account .play {
    width: 5px;
    height: 8px;
}
.keyword {
    width: 178px;
    height: 20px;
    padding: 0 3px;
    background: #454f61;
    font-style: italic;
}
.keyword::placeholder {
    color: #b3b8c2;
}
.keyword + button {
    margin-left: -3px;
}
.login {
    gap: 4px;
}
.login .caret {
    margin: 0 2px 0 56px;
}
.share {
    gap: 6px;
}
.help {
    gap: 8px;
    padding-left: 10px;
    border-left: 1px solid #565c66;
}
.help b {
    width: 14px;
    height: 14px;
    line-height: 14px;
    border-radius: 50%;
    background: #fff;
    color: #2557a8;
    text-align: center;
}
.window-buttons {
    display: flex;
    gap: 11px;
    padding: 0 4px 0 67px;
}
.window-buttons svg {
    width: 14px;
    height: 14px;
}
.menu {
    display: flex;
    height: 22px;
    padding-left: 4px;
}
.menu button {
    height: 18px;
    margin-top: 4px;
    padding: 0 10px;
    color: #adb1b7;
}
.menu .active {
    background: #3b4453;
    color: #fff;
}
.menu .minimize {
    gap: 5px;
    padding-left: 22px;
}
.menu .minimize svg {
    width: 14px;
    height: 8px;
}

/* ribbon */
.ribbon {
    display: flex;
    gap: 1px;
    height: 97px;
    padding-left: 2px;
}
.panel {
    display: flex;
    flex-direction: column;
    background: #3b4453;
}
.panel-body {
    display: flex;
    flex: 1;
    padding-top: 5px;
}
.panel-title {
    display: flex;
    align-items: center;
    justify-content: center;
    gap: 8px;
    height: 18px;
    position: relative;
}
.launch-pad {
    padding-right: 12px;
}
.launcher {
    position: absolute;
    right: 4px;
    width: 6px;
    height: 6px;
}
.draw { width: 209px; }
.modify { width: 226px; }
.annotate { width: 155px; }
.layers { width: 251px; }
.block { width: 133px; }
.props { width: 243px; }
.group { width: 67px; }
.util, .clip { width: 75px; }
.view { width: 60px; }

.big {
    flex-direction: column;
    justify-content: flex-start;
    padding-top: 2px;
    height: 72px;
    line-height: 17px;
}
.big svg {
    width: 32px;
    height: 32px;
    margin-bottom: 3px;
}
.big .caret {
    margin-top: 3px;
}
.w36 { width: 36px; }
.w38 { width: 38px; }
.w40 { width: 40px; }
.w42 { width: 42px; }
.w46 { width: 46px; }
.w50 { width: 50px; }
.w60 { width: 60px; }

.stack {
    display: flex;
    flex-direction: column;
}
.small {
    justify-content: flex-start;
    gap: 5px;
    height: 24px;
}
.small .caret {
    margin-left: 4px;
}
.draw .stack {
    padding-left: 5px;
}
.draw .stack .caret {
    margin-left: 0;
}
.modify-grid {
    display: grid;
    grid-template-columns: 59px 59px 75px 24px;
    grid-auto-rows: 24px;
    padding-left: 7px;
}
.annotate .stack {
    padding-left: 5px;
}
.block .stack {
    padding-left: 3px;
}
.combo {
    display: flex;
    align-items: center;
    gap: 2px;
    height: 22px;
    margin-bottom: 2px;
    padding: 1px 2px 0 3px;
    border: 1px solid #2a313c;
    background: #4d596d;
}
.layers .combo {
    width: 208px;
}
.swatch {
    width: 14px;
    height: 14px;
    margin: 0 4px;
    background: #fff;
    border: 1px solid #000;
}
.big-swatch {
    width: 16px;
    height: 16px;
    margin: 0 8px;
    border-color: #aaa;
}
.line {
    width: 64px;
    height: 1px;
    background: #fff;
}
.layer-row {
    display: flex;
    gap: 8px;
    height: 24px;
    padding-left: 3px;
}
.prop-icons {
    gap: 8px;
    padding-top: 4px;
    width: 20px;
}
.prop-combos {
    width: 180px;
}
.tools {
    align-items: center;
}
.group .tools button, .util .tools button, .clip .tools button {
    width: 24px;
    height: 22px;
    margin-bottom: 2px;
}
.group .tools {
    width: 22px;
}
.tools .on {
    border: 1px solid #7cc5ff;
    background: #41566e;
}

/* file tabs */
.file-tabs {
    display: flex;
    align-items: flex-end;
    height: 31px;
    padding-left: 18px;
    border-bottom: 4px solid #3b4453;
}
.file-tab {
    justify-content: space-between;
    width: 126px;
    height: 22px;
    padding: 0 14px;
    border-radius: 8px 8px 0 0;
    background: #2e3642;
    color: #b4b8be;
}
.file-tab.active {
    background: #3b4453;
    color: #fff;
    padding: 0 15px 0 11px;
}
.file-tab svg {
    width: 9px;
    height: 9px;
}
.new-tab {
    width: 22px;
    height: 14px;
    margin: 0 0 4px 5px;
    border-radius: 0 8px 8px 8px;
    background: #2f3743;
    font-size: 16px;
    font-weight: bold;
    color: #aaa;
}

/* drawing area */
.canvas {
    flex: 1;
    position: relative;
    background: #222830;
}
.viewport-label {
    padding: 6px 3px;
}
.viewport-buttons {
    position: absolute;
    top: 9px;
    right: 17px;
    display: flex;
    gap: 8px;
}
.viewport-buttons svg {
    width: 12px;
    height: 12px;
}
.cross-v, .cross-h {
    position: absolute;
    background: #e8e8e8;
}
.cross-v {
    left: 721px;
    top: 195px;
    bottom: 28px;
    width: 1px;
}
.cross-h {
    left: 107px;
    right: 583px;
    bottom: 28px;
    height: 1px;
}
.ucs {
    position: absolute;
    left: 15px;
    bottom: 13px;
    width: 76px;
    height: 76px;
}
.viewcube {
    position: absolute;
    top: 36px;
    right: 20px;
    width: 140px;
    height: 140px;
    font-size: 18px;
    font-weight: 500;
    line-height: 20px;
    color: #b0b2b4;
}
.viewcube svg {
    width: 140px;
    height: 140px;
}
.viewcube > span {
    position: absolute;
}
.viewcube .n { left: 61px; top: 4px; }
.viewcube .s { left: 61px; bottom: 3px; }
.viewcube .west { left: 4px; top: 60px; }
.viewcube .e { right: 5px; top: 60px; }
.face {
    position: absolute;
    top: 44px;
    left: 44px;
    width: 52px;
    height: 52px;
    background: #b0b2b3;
    border: 1px solid #85888b;
    color: #4c5661;
}
.face span {
    width: 32px;
    background: #a1a8ae;
    font-size: 28px;
    font-weight: normal;
    line-height: 32px;
}
.wcs {
    position: absolute;
    top: 193px;
    right: 66px;
    width: 48px;
    height: 18px;
    gap: 5px;
    border-radius: 4px;
    background: #8f939f;
    color: #4c515a;
    font-family: "Liberation Sans", sans-serif;
    font-size: 11px;
}
.wcs svg {
    width: 10px;
    height: 6px;
}
.net {
    position: absolute;
    top: 241px;
    right: 66px;
    display: flex;
    align-items: center;
}
.ball {
    position: relative;
    z-index: 1;
    display: flex;
    align-items: center;
    justify-content: center;
    width: 60px;
    height: 60px;
    margin-right: -25px;
    border: 1px solid #181a26;
    border-radius: 50%;
    background: linear-gradient(#3a4052, #292e3d);
    color: #fff;
}
.ball svg {
    position: absolute;
    width: 58px;
    height: 58px;
}
.ball strong {
    font: 300 25px "Roboto", sans-serif;
}
.ball small {
    padding-top: 8px;
    font-size: 10px;
}
.rates {
    width: 84px;
    border: 1px solid #171923;
    border-radius: 0 20px 20px 0;
    background: #1f222e;
    color: #8d909a;
    font-family: "Roboto", sans-serif;
    font-size: 11px;
}
.rates p {
    display: flex;
    align-items: center;
    justify-content: flex-end;
    gap: 1px;
    height: 20px;
    margin: 0;
    padding: 0 8px 0 26px;
}
.rates p + p {
    border-top: 1px solid #2a2d39;
}
.rates svg {
    width: 8px;
    height: 8px;
    margin-right: auto;
}
.rates b {
    color: #fff;
    font-size: 12px;
    font-weight: 500;
}
.navbar {
    position: absolute;
    top: 236px;
    right: 11px;
    border-radius: 4px;
    background: #5b6063;
}
.navbar svg {
    width: 32px;
    height: 212px;
}
.edge {
    position: absolute;
    top: 0;
    right: 0;
    bottom: 0;
    width: 7px;
    border-right: 1px solid #27c8ee;
    background: linear-gradient(#a8c6ea, #dfe8f5 90px, #b8cce6 91px);
}

/* command line */
.history {
    position: absolute;
    left: 447px;
    bottom: 29px;
    padding: 1px 2px 0;
    border-radius: 2px;
    background: #565859;
    color: #c8c8c8;
    font-family: "Liberation Mono", "Noto Sans CJK SC", monospace;
    line-height: 15px;
}
.command {
    position: absolute;
    left: 384px;
    right: 384px;
    bottom: 1px;
    height: 26px;
    display: flex;
    align-items: center;
    padding-left: 5px;
    background: #2d3340;
}
.grip {
    width: 5px;
    height: 18px;
    margin-right: 5px;
}
.command button svg {
    width: 10px;
    height: 10px;
}
.command .wrench {
    padding: 0 5px 0 11px;
}
.command .wrench svg {
    width: 16px;
    height: 16px;
}
.prompt {
    flex: 1;
    display: flex;
    align-items: center;
    gap: 6px;
    height: 25px;
    padding: 3px 4px 0 3px;
    background: #fff;
    color: #000;
    font-family: "Liberation Mono", "Noto Sans CJK SC", monospace;
}
.prompt svg {
    width: 14px;
    height: 12px;
}
.prompt .caret {
    background: #666;
}
.prompt span {
    white-space: nowrap;
}
.prompt input {
    flex: 1;
}

/* status bar */
.statusbar {
    display: flex;
    justify-content: space-between;
    height: 29px;
    padding-right: 1px;
    border-top: 1px solid #454b55;
}
.layout-tabs {
    display: flex;
    gap: 4px;
    padding-left: 13px;
}
.layout-tabs button {
    width: 50px;
    height: 17px;
    border-radius: 0 0 8px 8px;
    background: #2b323e;
    color: #b4b8be;
}
.layout-tabs .active {
    width: 44px;
    background: #3b4453;
    color: #fff;
    font-weight: bold;
}
.layout-tabs .add {
    width: 22px;
    height: 15px;
    margin-left: 3px;
    font-size: 15px;
    font-weight: bold;
}
.status {
    display: flex;
    gap: 1px;
    padding-top: 1px;
}
.seg {
    display: flex;
    align-items: center;
    height: 24px;
    background: #3b4453;
}
.seg.wide {
    margin-left: 2px;
}
.seg button {
    width: 24px;
    height: 22px;
}
.seg .on {
    border: 1px solid #3b4453;
    border-width: 0 1px;
    background: #5f8fc4;
    background-clip: padding-box;
}
.seg .muted {
    background-color: #4f7299;
}
.muted svg {
    opacity: 0.5;
}
.seg .caret {
    margin: 0 4px;
}
.seg .text {
    width: 27px;
}
.seg .scale {
    width: 55px;
}
.seg .perf {
    width: 30px;
}
.units {
    width: 97px;
}
.units .text {
    margin: 0 auto 0 5px;
}
.coords {
    justify-content: flex-end;
    width: 180px;
    padding-right: 4px;
}

/* taskbar */
.taskbar {
    display: flex;
    height: 39px;
    padding-left: 1px;
    background: linear-gradient(90deg, #2b3336, #272d31 25%, #363e40 45%, #343c3e 75%, #2a3033);
}
.task {
    width: 49px;
    height: 39px;
}
.task svg {
    width: 24px;
    height: 24px;
}
.task.start svg {
    width: 16px;
    height: 16px;
}
.task.open {
    background: linear-gradient(#76a9d8, #76a9d8) center bottom / 40px 2px no-repeat;
}
.task.current {
    background: #23425c;
}
.tray {
    display: flex;
    align-items: center;
    gap: 8px;
    margin-left: auto;
}
.lang {
    width: 16px;
    font-size: 13px;
}
.sg {
    width: 18px;
    height: 18px;
}
.tray .sg {
    margin-left: 2px;
}
.clock {
    display: flex;
    flex-direction: column;
    align-items: center;
    justify-content: center;
    width: 122px;
    padding-left: 6px;
    line-height: 19px;
    color: #fff;
}
.show-desktop {
    width: 4px;
    border-left: 1px solid #777;
}

/* floating pieces */
.ime {
    position: absolute;
    top: 71px;
    right: 66px;
    display: flex;
}
.ime button {
    width: 37px;
    height: 40px;
    border: 1px solid #c9c9c9;
    border-bottom: 5px solid #bcbcbc;
    border-radius: 6px;
    background: #fdfdfd;
    color: #5d5b58;
    font-size: 17px;
}
.ime .shirt {
    width: 20px;
    height: 18px;
}
.watermark {
    position: absolute;
    right: 102px;
    bottom: 38px;
    width: 342px;
    color: #bcbec0;
}
.brand {
    display: flex;
    align-items: flex-end;
    justify-content: space-between;
    margin-bottom: 4px;
    padding-right: 6px;
}
.bai {
    padding-bottom: 4px;
    font: bold 76px/54px "Liberation Sans", sans-serif;
}
.paw {
    position: relative;
}
.paw svg {
    width: 100px;
    height: 108px;
}
.paw b {
    position: absolute;
    left: 0;
    right: 0;
    bottom: 14px;
    text-align: center;
    color: #222830;
    font: bold 46px/34px "Liberation Sans", sans-serif;
}
.jingyan {
    padding-bottom: 6px;
    font: 900 56px/54px "Noto Sans CJK SC", sans-serif;
}
.url {
    color: rgba(235, 235, 235, 0.85);
    font-size: 40px;
    line-height: 54px;
}
.marks {
    position: absolute;
    left: 377px;
    bottom: 33px;
    width: 530px;
    height: 180px;
}
```
